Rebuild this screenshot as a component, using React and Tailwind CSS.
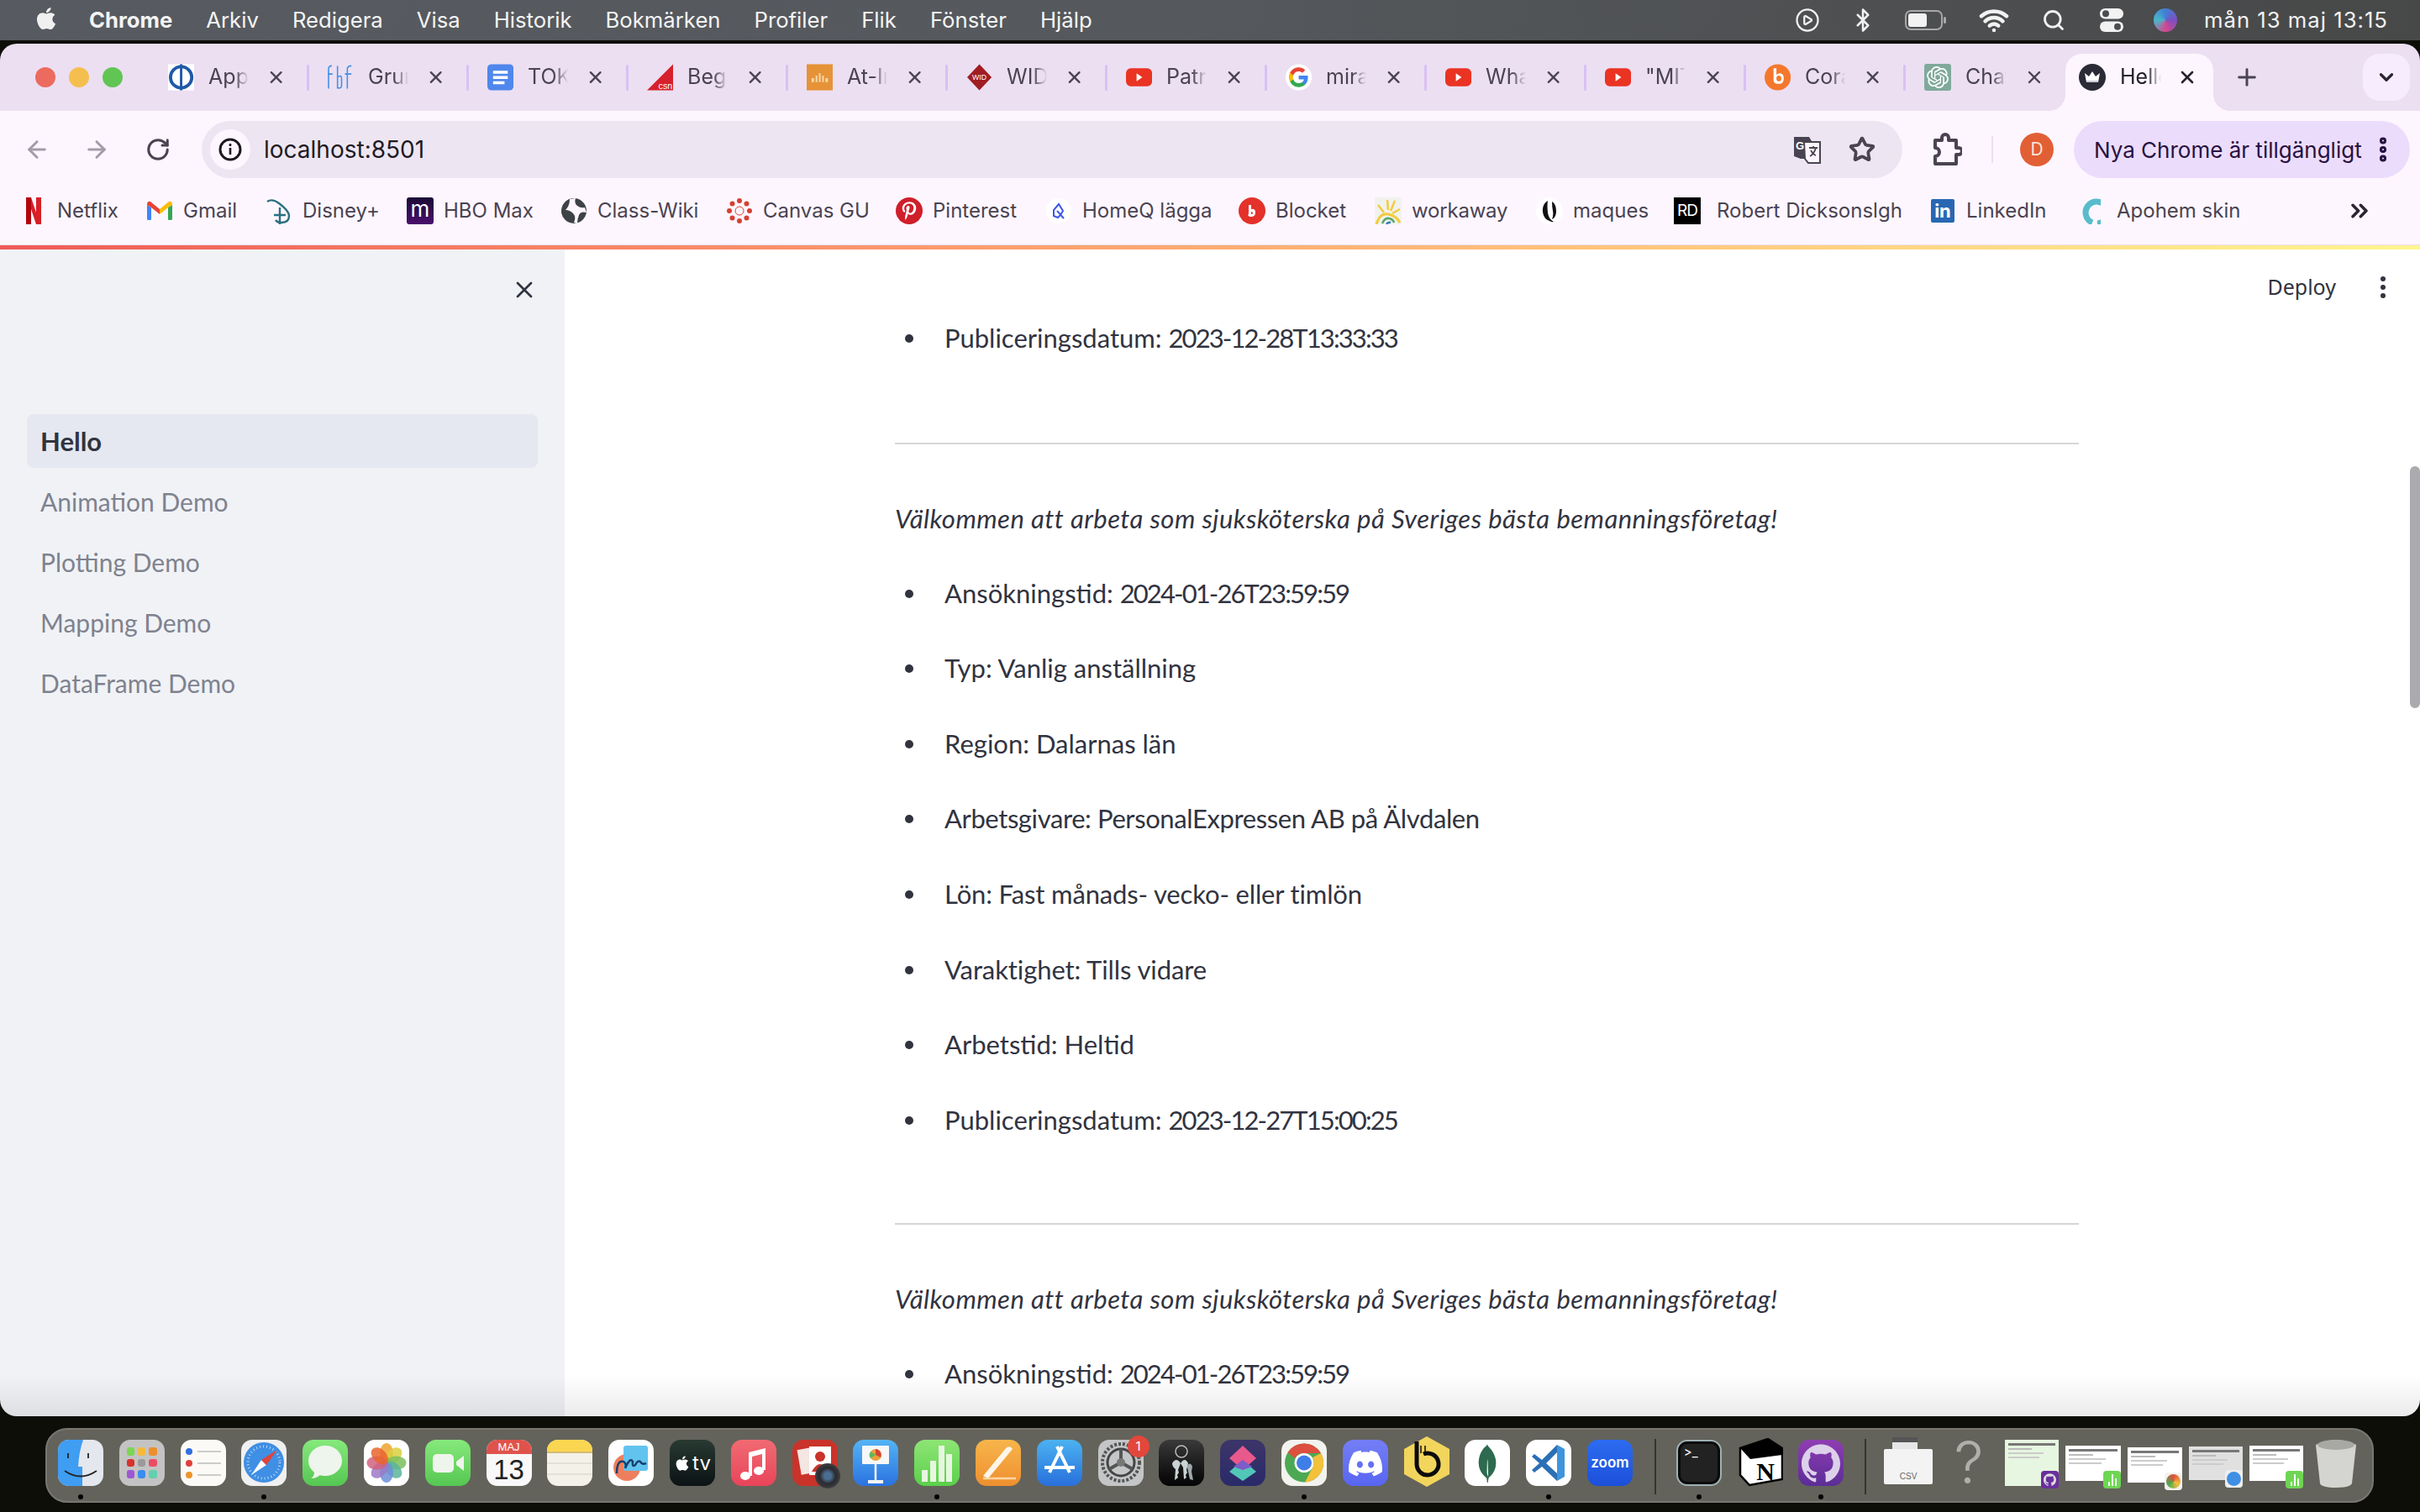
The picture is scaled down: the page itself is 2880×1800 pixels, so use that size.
import { ArrowLeft, ArrowRight, RotateCw, Star, ChevronsRight, ChevronDown, Plus, X, Search, Wifi, Bluetooth, CirclePlay, EllipsisVertical } from 'lucide-react';
import { FaApple, FaPinterestP } from 'react-icons/fa';
import { SiOpenai, SiDiscord, SiMongodb, SiGithub } from 'react-icons/si';

const sans = 'font-["Inter","Liberation_Sans",sans-serif]';
const body = 'font-["Lato","Noto_Sans",sans-serif]';

const YouTube = () => (
  <svg viewBox="0 0 32 32" className="w-8 h-8">
    <rect x="0" y="5" width="32" height="22" rx="6" fill="#ea3323" />
    <path d="M13 11l7 5-7 5z" fill="#fff" />
  </svg>
);

const GoogleG = () => (
  <svg viewBox="0 0 48 48" className="w-8 h-8">
    <circle cx="24" cy="24" r="24" fill="#fff" />
    <path d="M41 24.500c0-1.300-.1-2.500-.3-3.500H24v6.800h9.600c-.4 2.200-1.700 4-3.500 5.300v4.400h5.700C39.100 34.400 41 29.900 41 24.500z" fill="#4285f4" />
    <path d="M24 42c4.700 0 8.700-1.600 11.800-4.400l-5.700-4.400c-1.600 1.100-3.700 1.700-6.100 1.700-4.700 0-8.600-3.100-10-7.400H8.100v4.600C11 37.900 17 42 24 42z" fill="#34a853" />
    <path d="M14 27.500c-.4-1.100-.6-2.300-.6-3.500s.2-2.400.6-3.500v-4.600H8.100C6.800 18.300 6 21 6 24s.8 5.700 2.100 8.100z" fill="#fbbc05" />
    <path d="M24 13.100c2.600 0 5 .9 6.800 2.700l5.100-5.100C32.700 7.800 28.700 6 24 6 17 6 11 10.100 8.100 15.900l5.900 4.600c1.400-4.300 5.300-7.400 10-7.400z" fill="#ea4335" />
  </svg>
);

const Crown = () => (
  <svg viewBox="0 0 32 32" className="w-8 h-8">
    <circle cx="16" cy="16" r="16" fill="#2a2b36" />
    <path d="M7 11l5 4 4-6 4 6 5-4-2 11H9z" fill="#fff" />
    <path d="M9 20h14v2H9z" fill="#c9c9d4" />
  </svg>
);

const tabs = [
  { title: 'Appl', icon: (
    <svg viewBox="0 0 32 32" className="w-8 h-8"><rect width="32" height="32" fill="#fff" /><ellipse cx="16" cy="16" rx="13" ry="13" fill="none" stroke="#1f5aa8" strokeWidth="4" /><rect x="14.500" y="0" width="3" height="32" fill="#1f5aa8" /></svg>
  ) },
  { title: 'Grun', icon: (
    <svg viewBox="0 0 32 32" className="w-8 h-8" fill="none" stroke="#3f8fe8" strokeWidth="1.600"><path d="M1 30V6q0-4 4-4M0 12h6M12 2v28M12 16q5-4 5 2v8q0 4-5 3M24 30V6q0-4 5-4M21 12h8" /></svg>
  ) },
  { title: 'TOK', icon: (
    <svg viewBox="0 0 32 32" className="w-8 h-8"><rect width="32" height="32" rx="5" fill="#5087ec" /><path d="M7 8h18v3.500H7zM7 14.500h18V18H7zM7 21h14v3.500H7z" fill="#fff" /></svg>
  ) },
  { title: 'Begä', icon: (
    <svg viewBox="0 0 32 32" className="w-8 h-8"><path d="M32 0v32H0z" fill="#d6202c" /><text x="14" y="30" fontSize="11" fill="#fff" fontFamily="Liberation Sans">csn</text></svg>
  ) },
  { title: 'At-In', icon: (
    <svg viewBox="0 0 32 32" className="w-8 h-8"><rect width="32" height="32" fill="#e69337" /><path d="M6 17h3v5H6zM11 14h2v8h-2zM15 11h2v11h-2zM19 14h2v8h-2zM23 17h3v5h-3z" fill="#f8d9a8" /></svg>
  ) },
  { title: 'WID', icon: (
    <svg viewBox="0 0 32 32" className="w-8 h-8"><path d="M16 0l15 16-15 16L1 16z" fill="#a01d22" /><text x="16" y="19" fontSize="9" fill="#fff" textAnchor="middle" fontFamily="Liberation Sans">WID</text></svg>
  ) },
  { title: 'Patri', icon: <YouTube /> },
  { title: 'mira', icon: <GoogleG /> },
  { title: 'Wha', icon: <YouTube /> },
  { title: '"MIT', icon: <YouTube /> },
  { title: 'Cora', icon: (
    <svg viewBox="0 0 32 32" className="w-8 h-8"><circle cx="16" cy="16" r="16" fill="#f4782c" /><path d="M11 5h3.500v8q2-2 4-2 5 0 5 6.500T17.500 24q-6 0-6.500-4zM14.500 17.500q0 3.500 3 3.500t3-3.500-3-3.500-3 3.500z" fill="#fff" fillRule="evenodd" /></svg>
  ) },
  { title: 'Chat', icon: (
    <span className="w-8 h-8 bg-[#7fa99b] rounded-[3px] flex items-center justify-center text-white"><SiOpenai size={26} /></span>
  ) },
];

const bookmarks = [
  { name: 'Netflix', w: 'ml-[12px] w-[72px]', icon: (
    <svg viewBox="0 0 32 32" className="w-8 h-8"><path d="M7 0h6l6 18V0h6v32h-6L13 14v18H7z" fill="#d81f26" /><path d="M7 0h6v32H7z" fill="#b1060f" /></svg>
  ) },
  { name: 'Gmail', w: 'ml-[12px] w-[64px]', icon: (
    <svg viewBox="0 0 32 32" className="w-8 h-8"><path d="M1 26V9l5 3v14q0 1-1 1H3q-2 0-2-1z" fill="#4285f4" /><path d="M31 26V9l-5 3v14q0 1 1 1h2q2 0 2-1z" fill="#34a853" /><path d="M6 12L1 9q0-5 4-4l11 9v6z" fill="#ea4335" /><path d="M26 12l5-3q0-5-4-4L16 14v6z" fill="#fbbc05" /></svg>
  ) },
  { name: 'Disney+', w: 'ml-[12px] w-[90px]', icon: (
    <svg viewBox="0 0 32 32" className="w-8 h-8" fill="none" stroke="#2b6f80" strokeWidth="2.400"><path d="M2 5q6-4 14 2 12 9 12 15 0 8-9 8-5 0-7-3" /><path d="M17 12v20M10 21h14" /></svg>
  ) },
  { name: 'HBO Max', w: 'ml-[12px] w-[105px]', icon: (
    <span className={`w-8 h-8 rounded-[3px] bg-linear-to-b from-[#1c0a36] to-[#4a0f6e] text-white flex items-center justify-center text-[26px] leading-none pb-1 ${sans}`}>m</span>
  ) },
  { name: 'Class-Wiki', w: 'ml-[12px] w-[119px]', icon: (
    <svg viewBox="0 0 32 32" className="w-8 h-8"><circle cx="16" cy="16" r="15" fill="#3d4245" /><path d="M18 1q-2 6 2 9t9 2l2 6q-7-2-9 3t-2 10l-4-1q3-7-1-11T6 15Q11 10 11 2z" fill="#fdf6ff" /></svg>
  ) },
  { name: 'Canvas GU', w: 'ml-[12px] w-[124px]', icon: (
    <svg viewBox="0 0 32 32" className="w-8 h-8" fill="#d64033"><circle cx="16" cy="16" r="5" fill="none" stroke="#d64033" strokeWidth="1" /><circle cx="16" cy="4" r="3" /><circle cx="16" cy="28" r="3" /><circle cx="4" cy="16" r="3" /><circle cx="28" cy="16" r="3" /><circle cx="7.500" cy="7.500" r="3" /><circle cx="24.500" cy="7.500" r="3" /><circle cx="7.500" cy="24.500" r="3" /><circle cx="24.500" cy="24.500" r="3" /></svg>
  ) },
  { name: 'Pinterest', w: 'ml-[12px] w-[100px]', icon: (
    <span className="w-8 h-8 rounded-full bg-[#cf1f2b] text-white flex items-center justify-center"><FaPinterestP size={22} /></span>
  ) },
  { name: 'HomeQ lägga', w: 'ml-[12px] w-[152px]', icon: (
    <svg viewBox="0 0 32 32" className="w-8 h-8" fill="none" stroke="#3d57e8" strokeWidth="2"><circle cx="16" cy="16" r="15" fill="#fff" stroke="none" /><path d="M16 8l-6 7v7l5 2 3-3 3-5-5-8zM14 16l8 9" /></svg>
  ) },
  { name: 'Blocket', w: 'ml-[12px] w-[84px]', icon: (
    <svg viewBox="0 0 32 32" className="w-8 h-8"><circle cx="16" cy="16" r="16" fill="#e4312a" /><path d="M12 9h3v5q5-1 5 4 0 5-5 5t-3-4zM15 17v3q2 0 2-1.500T15 17z" fill="#fff" fillRule="evenodd" /></svg>
  ) },
  { name: 'workaway', w: 'ml-[12px] w-[114px] tracking-[-0.2px]', icon: (
    <svg viewBox="0 0 32 32" className="w-8 h-8" fill="none"><rect width="32" height="32" fill="#f1f2ee" /><path d="M15 3l1 12M24 4l-5 12M4 9l7 9M30 14l-9 5" stroke="#f3cb3e" strokeWidth="2.500" /><path d="M2 32q4-14 14-12t14 10" stroke="#f3cb3e" strokeWidth="3" /><path d="M9 31q3-7 8-6t6 5" stroke="#5aa567" strokeWidth="2.500" /><path d="M14 32q2-3 5-2" stroke="#2b7db5" strokeWidth="2.500" /></svg>
  ) },
  { name: 'maques', w: 'ml-[12px] w-[86px]', icon: (
    <svg viewBox="0 0 32 32" className="w-8 h-8"><circle cx="16" cy="16" r="16" fill="#fff" /><path d="M14 4q-7 4-6 13t8 11q4 2 5 1-6-3-7-11t0-14zM19 5q5 3 5 11t-5 10q2-5 1-10t-1-11z" fill="#111" /></svg>
  ) },
  { name: 'Robert Dicksonslgh', w: 'ml-[19px] w-[219px]', icon: (
    <span className={`w-8 h-8 bg-black text-white flex items-center justify-center text-[19px] tracking-[-1px] ${sans}`}>RD</span>
  ) },
  { name: 'LinkedIn', w: 'ml-[12px] w-[94px]', icon: (
    <span className="w-8 h-8 flex items-center justify-center"><span className={`w-[28px] h-[28px] rounded-[2px] bg-[#2867b2] text-white flex items-center justify-center text-[22px] font-bold leading-none ${sans}`}>in</span></span>
  ) },
  { name: 'Apohem skin', w: 'ml-[19px] w-[145px]', icon: (
    <svg viewBox="0 0 32 32" className="w-8 h-8" fill="none"><path d="M28 31a13 13 0 1 0-6-1" stroke="#58bccb" strokeWidth="7" /></svg>
  ) },
];

const sideLinks = ['Animation Demo', 'Plotting Demo', 'Mapping Demo', 'DataFrame Demo'];

const jobRows = [
  { label: 'Ansökningstid: ', date: '2024-01-26T23:59:59' },
  { label: 'Typ: Vanlig anställning' },
  { label: 'Region: Dalarnas län' },
  { label: 'Arbetsgivare: PersonalExpressen AB på Älvdalen', fit: 'tracking-[-0.4px]' },
  { label: 'Lön: Fast månads- vecko- eller timlön', fit: 'tracking-[-0.15px]' },
  { label: 'Varaktighet: Tills vidare', fit: 'tracking-[-0.1px]' },
  { label: 'Arbetstid: Heltid' },
  { label: 'Publiceringsdatum: ', date: '2023-12-27T15:00:25' },
];

const Bullet = ({ label, date, fit }) => (
  <li className="h-[89.6px] flex items-start">
    <span className="w-[59px] pt-[21px] pl-[12px]"><span className="block w-[10px] h-[10px] rounded-full bg-[#31333f]" /></span>
    <span className={`leading-[51.2px] whitespace-pre ${fit || ''}`}>
      {label}
      {date && <span className="tracking-[-1.9px]">{date}</span>}
    </span>
  </li>
);

const Rule = () => <hr className="border-0 h-[2px] bg-[#d6d6d8]" />;

const Intro = () => (
  <p className="italic h-[51px] leading-[51.2px] mt-[63px] mb-[38px] tracking-[0.46px]">Välkommen att arbeta som sjuksköterska på Sveriges bästa bemanningsföretag!</p>
);

const MenuBar = () => (
  <div className={`h-[48px] shrink-0 flex items-center pl-[40px] pr-[38px] bg-linear-to-r from-[#575a60] via-[#55585c] to-[#474848] text-white text-[25.7px] ${sans}`}>
    <FaApple size={30} className="mr-[36px] -mt-1 text-[#f0f0f0]" />
    <div className="flex gap-[40px] text-[#f4f4f4]">
      <span className="font-bold">Chrome</span>
      {['Arkiv', 'Redigera', 'Visa', 'Historik', 'Bokmärken', 'Profiler', 'Flik', 'Fönster', 'Hjälp'].map((m) => (
        <span key={m}>{m}</span>
      ))}
    </div>
    <div className="ml-auto flex items-center text-[#f2f2f2]">
      <CirclePlay size={30} strokeWidth={1.800} />
      <Bluetooth size={30} strokeWidth={2} className="ml-[36px]" />
      <svg viewBox="0 0 50 24" className="w-[50px] h-[24px] ml-[35px]" fill="none">
        <rect x="1" y="1" width="43" height="22" rx="6" stroke="#a8a8a8" strokeWidth="2" />
        <rect x="4" y="4" width="22" height="16" rx="3" fill="#f2f2f2" />
        <rect x="46" y="8" width="3" height="8" rx="1.500" fill="#a8a8a8" />
      </svg>
      <Wifi size={36} strokeWidth={3} className="ml-[38px]" />
      <Search size={28} strokeWidth={2.400} className="ml-[39px]" />
      <svg viewBox="0 0 30 30" className="w-[30px] h-[30px] ml-[40px]">
        <rect x="1" y="1" width="28" height="12.500" rx="6.250" fill="#f2f2f2" />
        <circle cx="8" cy="7.250" r="4" fill="#4c4d4f" />
        <rect x="1" y="16.500" width="28" height="12.500" rx="6.250" fill="#f2f2f2" />
        <circle cx="22" cy="22.750" r="4" fill="#4c4d4f" />
      </svg>
      <span className="w-[28px] h-[28px] ml-[35px] rounded-full bg-[conic-gradient(#3f7fd6,#7d4fc0,#d6478f,#48b7c9,#3f7fd6)]" />
      <span className="ml-[32px] whitespace-nowrap tracking-[1px]">mån 13 maj 13:15</span>
    </div>
  </div>
);

const Tab = ({ tab, last }) => (
  <div className="w-[190px] shrink-0 flex items-center pl-[22px] relative">
    {tab.icon}
    <span className="ml-[17px] w-[49px] overflow-hidden whitespace-nowrap text-[25px] text-[#4a4351] [mask-image:linear-gradient(to_right,black_65%,transparent)]">{tab.title}</span>
    <X size={24} strokeWidth={2.400} className="ml-[21px] text-[#4a4351]" />
    {!last && <span className="ml-[25px] w-[3px] h-[31px] bg-[#d9c0f4] rounded-full" />}
  </div>
);

const TabStrip = () => (
  <div className={`h-[80px] shrink-0 bg-[#ecdff2] flex items-center ${sans}`}>
    <div className="w-[178px] shrink-0 flex items-center pl-[42px] gap-[16px]">
      <span className="w-[24px] h-[24px] rounded-full bg-[#ed6a5e]" />
      <span className="w-[24px] h-[24px] rounded-full bg-[#f5bf4f]" />
      <span className="w-[24px] h-[24px] rounded-full bg-[#61c554]" />
    </div>
    {tabs.map((t, i) => (
      <Tab key={i} tab={t} last={i === tabs.length - 1} />
    ))}
    <div className="w-[176px] h-[68px] self-end rounded-t-[20px] bg-[#fdf6ff] flex items-center pl-[16px] pb-[12px] relative">
      <span className="absolute -left-[20px] bottom-0 w-[20px] h-[20px] bg-[radial-gradient(circle_at_0_0,transparent_20px,#fdf6ff_20px)]" />
      <span className="absolute -right-[20px] bottom-0 w-[20px] h-[20px] bg-[radial-gradient(circle_at_100%_0,transparent_20px,#fdf6ff_20px)]" />
      <Crown />
      <span className="ml-[17px] w-[49px] overflow-hidden whitespace-nowrap text-[25px] text-[#26222b] [mask-image:linear-gradient(to_right,black_65%,transparent)]">Hello</span>
      <X size={24} strokeWidth={2.600} className="ml-[19px] text-[#26222b]" />
    </div>
    <Plus size={32} strokeWidth={2.200} className="ml-[24px] text-[#4a4351]" />
    <div className="ml-auto mr-[12px] w-[56px] h-[56px] rounded-[20px] bg-[#f7ecfe] flex items-center justify-center">
      <ChevronDown size={26} strokeWidth={3} className="text-[#2a2530]" />
    </div>
  </div>
);

const Toolbar = () => (
  <div className={`h-[80px] shrink-0 bg-[#fdf6ff] flex items-start pt-[12px] ${sans}`}>
    <div className="w-[240px] h-[68px] shrink-0 flex items-center pl-[28px]">
      <ArrowLeft size={32} strokeWidth={2.200} className="text-[#a29da8]" />
      <ArrowRight size={32} strokeWidth={2.200} className="ml-[39px] text-[#a29da8]" />
      <RotateCw size={30} strokeWidth={2.400} className="ml-[42px] text-[#4a4351]" />
    </div>
    <div className="w-[2024px] h-[68px] rounded-full bg-[#ede6f2] flex items-center pl-[10px] pr-[32px]">
      <span className="w-[48px] h-[48px] rounded-full bg-[#fdf6ff] flex items-center justify-center">
        <svg viewBox="0 0 28 28" className="w-[28px] h-[28px]" fill="none">
          <circle cx="14" cy="14" r="12" stroke="#1c1820" strokeWidth="3" />
          <path d="M14 12v8M14 7v3" stroke="#1c1820" strokeWidth="2.600" />
        </svg>
      </span>
      <span className="ml-[16px] text-[28px] text-[#1f1b24]">localhost:8501</span>
      <svg viewBox="0 0 34 34" className="w-[34px] h-[34px] ml-auto">
        <path d="M1 2h18l3 5h-3v21H9L1 25z" fill="#4a4351" />
        <path d="M13 8h19v25H18l-4-5z" fill="#fdf6ff" stroke="#4a4351" strokeWidth="2" />
        <text x="3" y="17" fontSize="13" fontWeight="700" fill="#fff" fontFamily="Liberation Sans">G</text>
        <path d="M19 15h10M24 13v2M27 15q-2 7-7 10M21 18q3 5 6 6" stroke="#4a4351" strokeWidth="1.800" fill="none" />
      </svg>
      <Star size={32} strokeWidth={2.800} className="ml-[32px] text-[#4a4351]" />
    </div>
    <div className="w-[204px] h-[68px] shrink-0 flex items-center pl-[35px]">
      <svg viewBox="0 0 36 40" className="w-[36px] h-[40px]" fill="none" stroke="#4a4351" strokeWidth="4" strokeLinejoin="round">
        <path d="M4 9h8V6a4 4 0 0 1 8 0v3h9v9h3a4 4 0 0 1 0 8h-3v11H4v-9a5 5 0 0 0 0-10z" />
      </svg>
      <span className="ml-[35px] w-[2px] h-[32px] bg-[#e9dff0]" />
      <span className="ml-[32px] w-[40px] h-[40px] rounded-full bg-[#e25f35] text-[#fbe3d8] text-[21px] flex items-center justify-center">D</span>
    </div>
    <div className="w-[400px] h-[68px] rounded-full bg-[#ecdcfc] flex items-center pl-[24px] text-[26px] text-[#271240] whitespace-nowrap">
      <span className="w-[326px]">Nya Chrome är tillgängligt</span>
      <EllipsisVertical size={36} strokeWidth={3.400} className="text-[#271240]" />
    </div>
  </div>
);

const BookmarkBar = () => (
  <div className={`h-[80px] shrink-0 bg-[#fdf6ff] border-b-[1px] border-[#ecdff2] flex items-center pl-[24px] text-[24px] text-[#4a4351] ${sans}`}>
    {bookmarks.map((b) => (
      <div key={b.name} className="flex items-center mr-[34px] -mt-[1px] shrink-0">
        {b.icon}
        <span className={`whitespace-nowrap ${b.w}`}>{b.name}</span>
      </div>
    ))}
    <ChevronsRight size={32} strokeWidth={2.600} className="ml-auto mr-[56px] -mt-[1px] text-[#2a2530]" />
  </div>
);

const Sidebar = () => (
  <aside className={`w-[672px] shrink-0 bg-[#f0f2f6] flex flex-col pl-[32px] pr-[32px] ${body}`}>
    <div className="h-[196px] flex justify-end pt-[32px]">
      <X size={32} strokeWidth={2} className="text-[#31333f]" />
    </div>
    <div className="h-[64px] rounded-[8px] bg-[#e5e8f0] pl-[16px] flex items-center text-[31px] font-bold text-[#31333f]">Hello</div>
    {sideLinks.map((l) => (
      <div key={l} className="h-[64px] mt-[8px] pl-[16px] flex items-center text-[30px] text-[#7f828e]">{l}</div>
    ))}
  </aside>
);

const Main = () => (
  <main className={`flex-1 relative overflow-hidden bg-white text-[31px] text-[#31333f] ${body}`}>
    <div className="absolute top-0 right-0 h-[89px] flex items-center pr-[41px] text-[#31333f]">
      <span className={`text-[25px] font-["Noto_Sans",sans-serif]`}>Deploy</span>
      <svg viewBox="0 0 6 26" className="w-[6px] h-[26px] ml-[53px]" fill="#31333f">
        <circle cx="3" cy="3" r="3" /><circle cx="3" cy="13" r="3" /><circle cx="3" cy="23" r="3" />
      </svg>
    </div>
    <div className="absolute top-[258px] right-0 w-[12px] h-[288px] rounded-full bg-[#ababaf]" />
    <div className="ml-[393px] w-[1409px] pt-[80px]">
      <ul><Bullet label="Publiceringsdatum: " date="2023-12-28T13:33:33" /></ul>
      <div className="mt-[60px]"><Rule /></div>
      <Intro />
      <ul>{jobRows.map((r) => <Bullet key={r.label} label={r.label} date={r.date} fit={r.fit} />)}</ul>
      <div className="mt-[59px]"><Rule /></div>
      <Intro />
      <ul><Bullet label="Ansökningstid: " date="2024-01-26T23:59:59" /></ul>
    </div>
  </main>
);

const tile = 'w-[54px] h-[55px] rounded-[13px] overflow-hidden flex items-center justify-center relative';

const dockApps = [
  { dot: true, el: (
    <svg viewBox="0 0 54 55" className="w-[54px] h-[55px] rounded-[13px]"><rect width="54" height="55" fill="#e4e7ee" /><path d="M0 0h30q-5 14-6 32h5v23H0z" fill="#3f9df2" /><path d="M12 16v6M36 16v6" stroke="#222" strokeWidth="1.800" /><path d="M8 37q19 13 38 0" stroke="#222" strokeWidth="1.800" fill="none" /></svg>
  ) },
  { el: (
    <div className={`${tile} bg-[#c3c3c3] grid grid-cols-3 gap-[4px] p-[9px]`}>
      {['bg-[#7bd64f]', 'bg-[#f6b93b]', 'bg-[#ee8e2d]', 'bg-[#d8322c]', 'bg-[#9a9a9a]', 'bg-[#ea4c65]', 'bg-[#9d57d6]', 'bg-[#3b8df0]', 'bg-[#62cfae]'].map((c) => (
        <span key={c} className={`rounded-[3px] h-full w-full ${c}`} />
      ))}
    </div>
  ) },
  { el: (
    <svg viewBox="0 0 54 55" className="w-[54px] h-[55px] rounded-[13px]"><rect width="54" height="55" fill="#fbfaf6" /><circle cx="10" cy="14" r="4" fill="#2f6fe0" /><circle cx="10" cy="28" r="4" fill="#e0403a" /><circle cx="10" cy="42" r="4" fill="#ee942d" /><path d="M20 14h28M20 28h28M20 42h28" stroke="#bdbdbd" strokeWidth="1.500" /></svg>
  ) },
  { dot: true, el: (
    <svg viewBox="0 0 54 55" className="w-[54px] h-[55px] rounded-[13px]"><rect width="54" height="55" fill="#f0f0f0" /><circle cx="27" cy="27" r="24" fill="#3f8fe4" /><circle cx="27" cy="27" r="19" fill="none" stroke="#bcd9f6" strokeWidth="3" strokeDasharray="1 3" /><path d="M12 42l12-18 6 6z" fill="#fff" /><path d="M43 12L24 24l6 6z" fill="#e0443a" /></svg>
  ) },
  { el: (
    <div className={`${tile} bg-linear-to-b from-[#86e97c] to-[#55c752]`}>
      <svg viewBox="0 0 54 55" className="w-[54px] h-[55px]"><ellipse cx="27" cy="25" rx="20" ry="18" fill="#eef5ec" /><path d="M14 38q0 6-4 8 7 0 12-5z" fill="#eef5ec" /></svg>
    </div>
  ) },
  { el: (
    <svg viewBox="0 0 54 55" className="w-[54px] h-[55px] rounded-[13px]"><rect width="54" height="55" fill="#fff" />
      {[['#f0a32f', 0], ['#d9d03f', 45], ['#7cbf5c', 90], ['#5bb59b', 135], ['#6d8ed8', 180], ['#9c79c8', 225], ['#d0627f', 270], ['#e9652f', 315]].map(([c, r]) => (
        <ellipse key={r} cx="27" cy="16" rx="8" ry="12" fill={c} opacity="0.850" transform={`rotate(${r} 27 27.500)`} />
      ))}
    </svg>
  ) },
  { el: (
    <div className={`${tile} bg-linear-to-b from-[#86e97c] to-[#55c752]`}>
      <svg viewBox="0 0 54 55" className="w-[54px] h-[55px]"><rect x="9" y="17" width="25" height="22" rx="5" fill="#eef5ec" /><path d="M37 26l9-7v18l-9-7z" fill="#eef5ec" /></svg>
    </div>
  ) },
  { el: (
    <div className={`${tile} bg-[#f8f8f8] flex-col justify-start font-["Liberation_Sans",sans-serif]`}>
      <span className="w-full h-[17px] bg-[#e0534c] text-white text-[13px] leading-[17px] text-center">MAJ</span>
      <span className="text-[#222] text-[33px] leading-[37px]">13</span>
    </div>
  ) },
  { el: (
    <svg viewBox="0 0 54 55" className="w-[54px] h-[55px] rounded-[13px]"><rect width="54" height="55" fill="#f4f1e8" /><rect width="54" height="14" fill="#fbd651" /><path d="M0 15h54" stroke="#c9a84e" strokeWidth="1.500" /><path d="M0 28h54M0 41h54" stroke="#dcdad2" strokeWidth="1.500" /></svg>
  ) },
  { el: (
    <svg viewBox="0 0 54 55" className="w-[54px] h-[55px] rounded-[13px]"><rect width="54" height="55" fill="#fff" /><circle cx="22" cy="33" r="16" fill="#ee7f5e" /><rect x="18" y="7" width="29" height="30" rx="3" fill="#62c3ee" /><path d="M10 40q0-16 8-14 4 2 2 8 6-14 9-8-1 7 3 4 3-6 6-4 2 4 7 2" stroke="#183f6c" strokeWidth="2.500" fill="none" /></svg>
  ) },
  { el: (
    <div className={`${tile} bg-linear-to-b from-[#283a32] to-[#0c1315] text-white gap-[2px]`}>
      <FaApple size={20} />
      <span className={`text-[24px] leading-none ${sans}`}>tv</span>
    </div>
  ) },
  { el: (
    <div className={`${tile} bg-linear-to-b from-[#f06a72] to-[#e8445a]`}>
      <svg viewBox="0 0 54 55" className="w-[54px] h-[55px]" fill="#fff"><path d="M21 15l20-5v26h-4V17l-12 3v23h-4z" /><ellipse cx="17" cy="43" rx="6" ry="5" /><ellipse cx="33" cy="37" rx="6" ry="5" /></svg>
    </div>
  ) },
  { el: (
    <div className={`${tile} bg-[#c9332a] !overflow-visible`}>
      <svg viewBox="0 0 54 55" className="w-[54px] h-[55px]"><rect x="8" y="10" width="22" height="30" fill="#f4e6e3" transform="rotate(-10 19 25)" /><rect x="20" y="8" width="26" height="34" fill="#fff" /><circle cx="33" cy="20" r="6" fill="#c9332a" /><path d="M23 38q10-18 20 0z" fill="#c9332a" /></svg>
      <span className="absolute -right-[3px] bottom-[-3px] w-[30px] h-[30px] rounded-full bg-[radial-gradient(circle,#4a6d90_20%,#2a2a2e_45%,#55565a_100%)]" />
    </div>
  ) },
  { el: (
    <div className={`${tile} bg-linear-to-b from-[#55b4f5] to-[#2c72e0]`}>
      <svg viewBox="0 0 54 55" className="w-[54px] h-[55px]"><rect x="11" y="7" width="32" height="22" rx="1" fill="#f7f7f7" /><circle cx="27" cy="18" r="7" fill="#e8a23a" /><path d="M27 18V11a7 7 0 0 1 6 10z" fill="#d6443a" /><path d="M27 18l-6 4a7 7 0 0 1 0-8z" fill="#5cb85c" /><path d="M27 29v20" stroke="#f5f5f5" strokeWidth="2.500" /><rect x="18" y="48" width="18" height="4" fill="#f5f5f5" /></svg>
    </div>
  ) },
  { dot: true, el: (
    <div className={`${tile} bg-linear-to-b from-[#8de575] to-[#5ad04a]`}>
      <svg viewBox="0 0 54 55" className="w-[54px] h-[55px]" fill="#e7f6e0"><rect x="9" y="36" width="7" height="14" /><rect x="19" y="25" width="7" height="25" /><rect x="29" y="7" width="7" height="43" /><rect x="38" y="17" width="7" height="33" /></svg>
    </div>
  ) },
  { el: (
    <div className={`${tile} bg-linear-to-b from-[#f7b54b] to-[#ee8f2e]`}>
      <svg viewBox="0 0 54 55" className="w-[54px] h-[55px]"><path d="M9 43L37 9q5-2 7 2L15 46z" fill="#fff5e8" /><path d="M9 46h39" stroke="#fbd7a5" strokeWidth="2.500" /></svg>
    </div>
  ) },
  { el: (
    <div className={`${tile} bg-linear-to-b from-[#4cb2f0] to-[#2a6fdc]`}>
      <svg viewBox="0 0 54 55" className="w-[54px] h-[55px]" stroke="#fff" strokeWidth="4" fill="none"><path d="M24 8l15 31M30 8L15 39M9 33h36" /></svg>
    </div>
  ) },
  { el: (
    <div className={`${tile} bg-[#c4c5c6] !overflow-visible`}>
      <svg viewBox="0 0 54 55" className="w-[54px] h-[55px]" fill="none"><circle cx="27" cy="27" r="22" stroke="#555" strokeWidth="4" strokeDasharray="3 2" /><circle cx="27" cy="27" r="16" stroke="#444" strokeWidth="3" /><path d="M27 27V11M27 27l14 8M27 27l-14 8" stroke="#555" strokeWidth="4" /><circle cx="27" cy="27" r="5" fill="#777" /></svg>
      <span className={`absolute -right-[7px] -top-[5px] w-[26px] h-[26px] rounded-full bg-[#e3473c] text-white text-[15px] flex items-center justify-center ${sans}`}>1</span>
    </div>
  ) },
  { el: (
    <div className={`${tile} bg-linear-to-b from-[#3a3a3a] to-[#050505]`}>
      <svg viewBox="0 0 54 55" className="w-[54px] h-[55px]" fill="#c9d2d4"><circle cx="27" cy="14" r="7" fill="none" stroke="#bbb" strokeWidth="1.500" /><path d="M16 28q5-8 10 0l-3 8 1 3-2 3 1 3-4 3 1-13q-4-3-4-7z" /><path d="M26 28q5-8 9 0l-2 8 1 3-2 3 1 3-3 2-1-14z" /><path d="M34 30q4-4 6 2l-1 6 2 10-4-1-3-14z" fill="#9fa9ab" /></svg>
    </div>
  ) },
  { el: (
    <div className={`${tile} bg-linear-to-b from-[#3c3568] to-[#2a2a6a]`}>
      <svg viewBox="0 0 54 55" className="w-[54px] h-[55px]"><path d="M27 24l16 14-16 11-16-11z" fill="#52c7b8" /><path d="M27 7l16 15-16 14-16-14z" fill="#e8598c" /><path d="M27 24l11 8-11 4-11-4z" fill="#7d5cc8" /></svg>
    </div>
  ) },
  { dot: true, el: (
    <svg viewBox="0 0 54 55" className="w-[54px] h-[55px] rounded-[13px]"><rect width="54" height="55" fill="#f2f2ee" /><circle cx="27" cy="27.500" r="23" fill="#4ca853" /><path d="M27 4.500a23 23 0 0 1 20 11.500H27a11 11 0 0 0-11 6L7.500 15A23 23 0 0 1 27 4.500z" fill="#dd4f3f" /><path d="M47 16a23 23 0 0 1-19 34.500L37 33a11 11 0 0 0 0-12z" fill="#f3c13a" /><circle cx="27" cy="27.500" r="11.500" fill="#fff" /><circle cx="27" cy="27.500" r="9" fill="#3f7ee8" /></svg>
  ) },
  { el: (
    <div className={`${tile} bg-linear-to-b from-[#747ef5] to-[#5865f2] text-white`}><SiDiscord size={40} /></div>
  ) },
  { el: (
    <svg viewBox="0 0 54 60" className="w-[54px] h-[60px] -mt-[3px]"><path d="M27 0l27 15v30L27 60 0 45V15z" fill="#f2d55c" /><path d="M15 6v27a13 13 0 1 0 8-12" fill="none" stroke="#0b0b0b" strokeWidth="5" /><path d="M20 20v-9M25 18v-7" stroke="#0b0b0b" strokeWidth="1.500" /></svg>
  ) },
  { el: (
    <div className={`${tile} bg-white text-[#2d6a4f]`}><SiMongodb size={46} /></div>
  ) },
  { dot: true, el: (
    <svg viewBox="0 0 54 55" className="w-[54px] h-[55px] rounded-[13px]"><rect width="54" height="55" fill="#fff" /><path d="M37 6l9 5v33l-9 5z" fill="#3f94dc" /><path d="M37 6L19 24 10 17l-3 3 9 8-9 8 3 3 9-7 18 17v-9L24 28 37 15z" fill="#2b6fb5" /></svg>
  ) },
  { el: (
    <div className={`${tile} bg-linear-to-b from-[#2d6cf0] to-[#1c4fdb] text-white text-[17px] font-semibold ${sans}`}>zoom</div>
  ) },
];

const dockTail = [
  { dot: true, el: (
    <div className={`${tile} bg-[#0a0a0a] border-[2px] border-[#9fb0b5] flex-col items-start justify-start`}>
      <div className={`m-[3px] w-[44px] h-[45px] rounded-[8px] bg-[#222] text-white text-[15px] leading-[20px] pl-[4px] ${sans}`}>&gt;_</div>
    </div>
  ) },
  { el: (
    <svg viewBox="0 0 54 58" className="w-[54px] h-[58px] -mt-[1px]"><path d="M3 12L36 1l17 11v37L14 56 3 44z" fill="#fff" stroke="#000" strokeWidth="2.500" /><path d="M3 12l12 13 38-5V12L36 1z" fill="#000" /><text x="33" y="50" fontSize="30" fontWeight="700" textAnchor="middle" fontFamily="Liberation Serif" fill="#000">N</text></svg>
  ) },
  { dot: true, el: (
    <div className={`${tile} bg-linear-to-b from-[#8f3db2] to-[#5c2d96] text-[#ddd0ea]`}><SiGithub size={46} /></div>
  ) },
];

const Thumb = ({ className, badge }) => (
  <div className={`relative bg-white shrink-0 flex flex-col gap-[3px] p-[4px] ${className}`}>
    <span className="h-[3px] bg-[#777] w-full" />
    <span className="h-[2px] bg-[#bbb] w-1/2" />
    <span className="h-[2px] bg-[#ccc] w-3/4" />
    <span className="h-[2px] bg-[#ccc] w-2/3" />
    {badge}
  </div>
);

const badgeBase = 'absolute right-0 -bottom-[9px] w-[21px] h-[21px] rounded-[4px] flex items-center justify-center';

const NumbersBadge = () => (
  <span className={`${badgeBase} bg-[#6ed653] gap-[2px] !items-end pb-[3px]`}>
    <span className="w-[2px] h-[5px] bg-white" /><span className="w-[2px] h-[14px] bg-white" /><span className="w-[2px] h-[9px] bg-white" />
  </span>
);

const Dock = () => (
  <div className="mt-[14px] ml-[54px] w-[2771px] h-[89px] rounded-[26px] bg-[#63635b] border-[2px] border-[#787870] flex items-start pt-[12px] pl-[13px] shrink-0">
    {dockApps.map((a, i) => (
      <div key={i} className="w-[72.8px] shrink-0 flex flex-col">
        <div className="h-[55px] flex items-center">{a.el}</div>
        {a.dot && <span className="mt-[10px] ml-[24px] w-[6px] h-[6px] rounded-full bg-black" />}
      </div>
    ))}
    <span className="ml-[7px] mr-[24px] mt-[-1px] w-[2px] h-[66px] bg-[#35352f] shrink-0" />
    {dockTail.map((a, i) => (
      <div key={i} className="w-[72.8px] shrink-0 flex flex-col">
        <div className="h-[55px] flex items-center">{a.el}</div>
        {a.dot && <span className="mt-[10px] ml-[24px] w-[6px] h-[6px] rounded-full bg-black" />}
      </div>
    ))}
    <span className="ml-[6px] mr-[21px] mt-[-1px] w-[2px] h-[66px] bg-[#35352f] shrink-0" />
    <div className="w-[58px] h-[56px] -mt-[3px] shrink-0 flex flex-col font-['Liberation_Sans',sans-serif]">
      <span className="ml-[10px] w-[30px] h-[14px] bg-[#e6e6e6] border-t-[6px] border-[#555]" />
      <span className="flex-1 bg-[#f3f3f3] rounded-[2px] flex items-end justify-center pb-[2px] text-[10px] text-[#666]">CSV</span>
    </div>
    <span className={`w-[86px] text-center text-[70px] font-light leading-[54px] text-[#b0b0aa] shrink-0 ${sans}`}>?</span>
    <div className="flex gap-[8px] items-start">
      <Thumb className="w-[64px] h-[55px] !bg-[#e6f6e0]" badge={<span className={`${badgeBase} !-bottom-[3px] bg-[#6a2f9c] text-[#ddd]`}><SiGithub size={15} /></span>} />
      <Thumb className="w-[66px] h-[42px] mt-[7px]" badge={<NumbersBadge />} />
      <Thumb className="w-[65px] h-[42px] mt-[9px]" badge={<span className={`${badgeBase} bg-[#f2f2ee]`}><span className="w-[17px] h-[17px] rounded-full bg-[conic-gradient(#dd4f3f,#f3c13a,#4ca853,#dd4f3f)]" /></span>} />
      <Thumb className="w-[64px] h-[40px] mt-[8px] !bg-[#e0e0e0]" badge={<span className={`${badgeBase} bg-[#eee]`}><span className="w-[17px] h-[17px] rounded-full bg-[#3f8fe4]" /></span>} />
      <Thumb className="w-[64px] h-[42px] mt-[7px]" badge={<NumbersBadge />} />
    </div>
    <svg viewBox="0 0 50 60" className="ml-[14px] w-[50px] h-[60px] -mt-[2px] shrink-0">
      <path d="M1 8q24-12 48 0l-5 46q-2 5-19 5T6 54z" fill="#d4d4d0" />
      <ellipse cx="25" cy="8" rx="22" ry="6" fill="#a8a8a4" />
    </svg>
  </div>
);

export default function App() {
  return (
    <div className="w-[2880px] h-[1800px] overflow-hidden bg-[#0e0e08] flex flex-col">
      <MenuBar />
      <div className="mt-[4px] h-[1634px] shrink-0 rounded-[20px] overflow-hidden flex flex-col relative">
        <TabStrip />
        <Toolbar />
        <BookmarkBar />
        <div className="h-[5px] shrink-0 bg-linear-to-r from-[#ef5a58] to-[#fff58f]" />
        <div className="flex-1 flex min-h-0">
          <Sidebar />
          <Main />
        </div>
        <div className="absolute left-0 right-0 bottom-0 h-[50px] bg-linear-to-b from-transparent to-black/8" />
      </div>
      <Dock />
    </div>
  );
}
